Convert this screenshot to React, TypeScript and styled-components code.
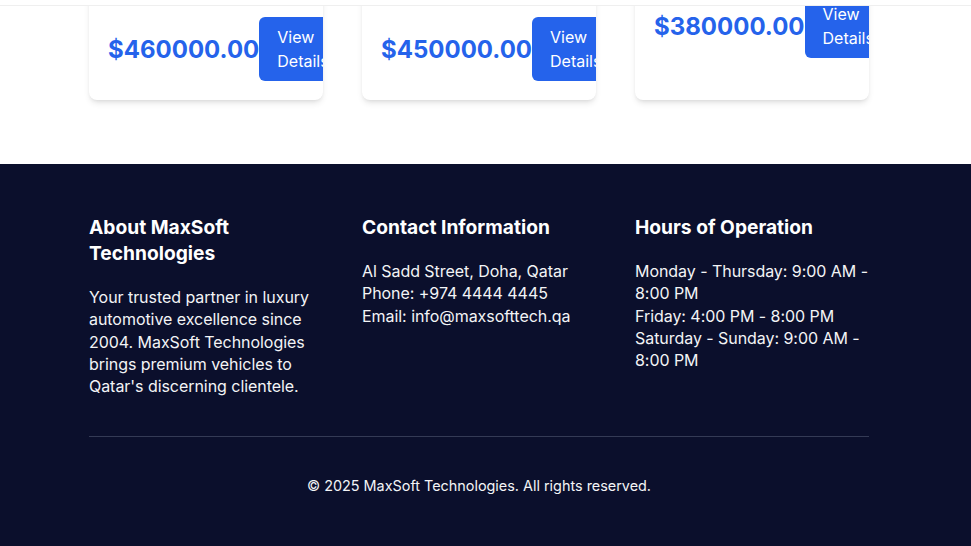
import React from "react";
import styled, { createGlobalStyle } from "styled-components";

const Global = createGlobalStyle`
  html, body { margin: 0; padding: 0; background: #ffffff; }
  body { font-family: Inter, "Noto Sans", sans-serif; overflow: hidden; }
  * { box-sizing: border-box; }
`;

const TopBar = styled.header`
  position: fixed;
  top: 0;
  left: 0;
  right: 0;
  height: 6px;
  background: #ffffff;
  border-bottom: 1px solid #efefef;
  z-index: 10;
`;

const Container = styled.div`
  width: 780px;
  margin-left: 89px;
`;

const CardsSection = styled.section`
  margin-top: -30px;
  padding-bottom: 64px;
`;

const Grid = styled.div`
  display: grid;
  grid-template-columns: repeat(3, 1fr);
  gap: 39px;
`;

const Card = styled.article`
  background: #ffffff;
  border-radius: 8px;
  overflow: hidden;
  box-shadow: 0 4px 6px -1px rgba(0, 0, 0, 0.1), 0 2px 4px -2px rgba(0, 0, 0, 0.1);
  padding: 20px 20px 19px 19px;
`;

const CardTop = styled.div<{ $h: number }>`
  height: ${(p) => p.$h}px;
`;

const PriceRow = styled.div`
  display: flex;
  align-items: center;
  justify-content: space-between;
`;

const Price = styled.span`
  font-size: 24px;
  font-weight: 700;
  color: #2563eb;
  white-space: nowrap;
`;

const Button = styled.button`
  font-family: inherit;
  font-size: 16px;
  line-height: 24px;
  color: #ffffff;
  background: #2563eb;
  border: none;
  border-radius: 6px;
  padding: 8px 20px 8px 18px;
  text-align: left;
  flex-shrink: 1;
  cursor: pointer;
`;

const Footer = styled.footer`
  background: #0b0f2c;
  color: #ffffff;
  padding: 50px 0 60px;
`;

const FooterGrid = styled.div`
  display: grid;
  grid-template-columns: repeat(3, 1fr);
  gap: 39px;
`;

const Column = styled.div``;

const Heading = styled.h3`
  margin: 0 0 20px;
  font-size: 19.2px;
  line-height: 26px;
  font-weight: 700;
  color: #ffffff;
`;

const Text = styled.p`
  margin: 0;
  font-size: 16px;
  line-height: 22.3px;
  letter-spacing: -0.05px;
  color: #f3f4f6;
`;

const Divider = styled.hr`
  border: none;
  border-top: 1px solid #343a55;
  margin: 39px 0 0;
`;

const Copyright = styled.p`
  margin: 39px 0 0;
  text-align: center;
  font-size: 14.4px;
  line-height: 20px;
  color: #f3f4f6;
`;

const cards = [
  { price: "$460000.00", top: 27 },
  { price: "$450000.00", top: 27 },
  { price: "$380000.00", top: 4 },
];

export default function App() {
  return (
    <>
      <Global />
      <TopBar />
      <CardsSection>
        <Container>
          <Grid>
            {cards.map((c) => (
              <Card key={c.price}>
                <CardTop $h={c.top} />
                <PriceRow>
                  <Price>{c.price}</Price>
                  <Button>View Details</Button>
                </PriceRow>
              </Card>
            ))}
          </Grid>
        </Container>
      </CardsSection>
      <Footer>
        <Container>
          <FooterGrid>
            <Column>
              <Heading>About MaxSoft Technologies</Heading>
              <Text>
                Your trusted partner in luxury automotive excellence since 2004. MaxSoft
                Technologies brings premium vehicles to Qatar's discerning clientele.
              </Text>
            </Column>
            <Column>
              <Heading>Contact Information</Heading>
              <Text>Al Sadd Street, Doha, Qatar</Text>
              <Text>Phone: +974 4444 4445</Text>
              <Text>Email: info@maxsofttech.qa</Text>
            </Column>
            <Column>
              <Heading>Hours of Operation</Heading>
              <Text>Monday - Thursday: 9:00 AM - 8:00 PM</Text>
              <Text>Friday: 4:00 PM - 8:00 PM</Text>
              <Text>Saturday - Sunday: 9:00 AM - 8:00 PM</Text>
            </Column>
          </FooterGrid>
          <Divider />
          <Copyright>© 2025 MaxSoft Technologies. All rights reserved.</Copyright>
        </Container>
      </Footer>
    </>
  );
}
